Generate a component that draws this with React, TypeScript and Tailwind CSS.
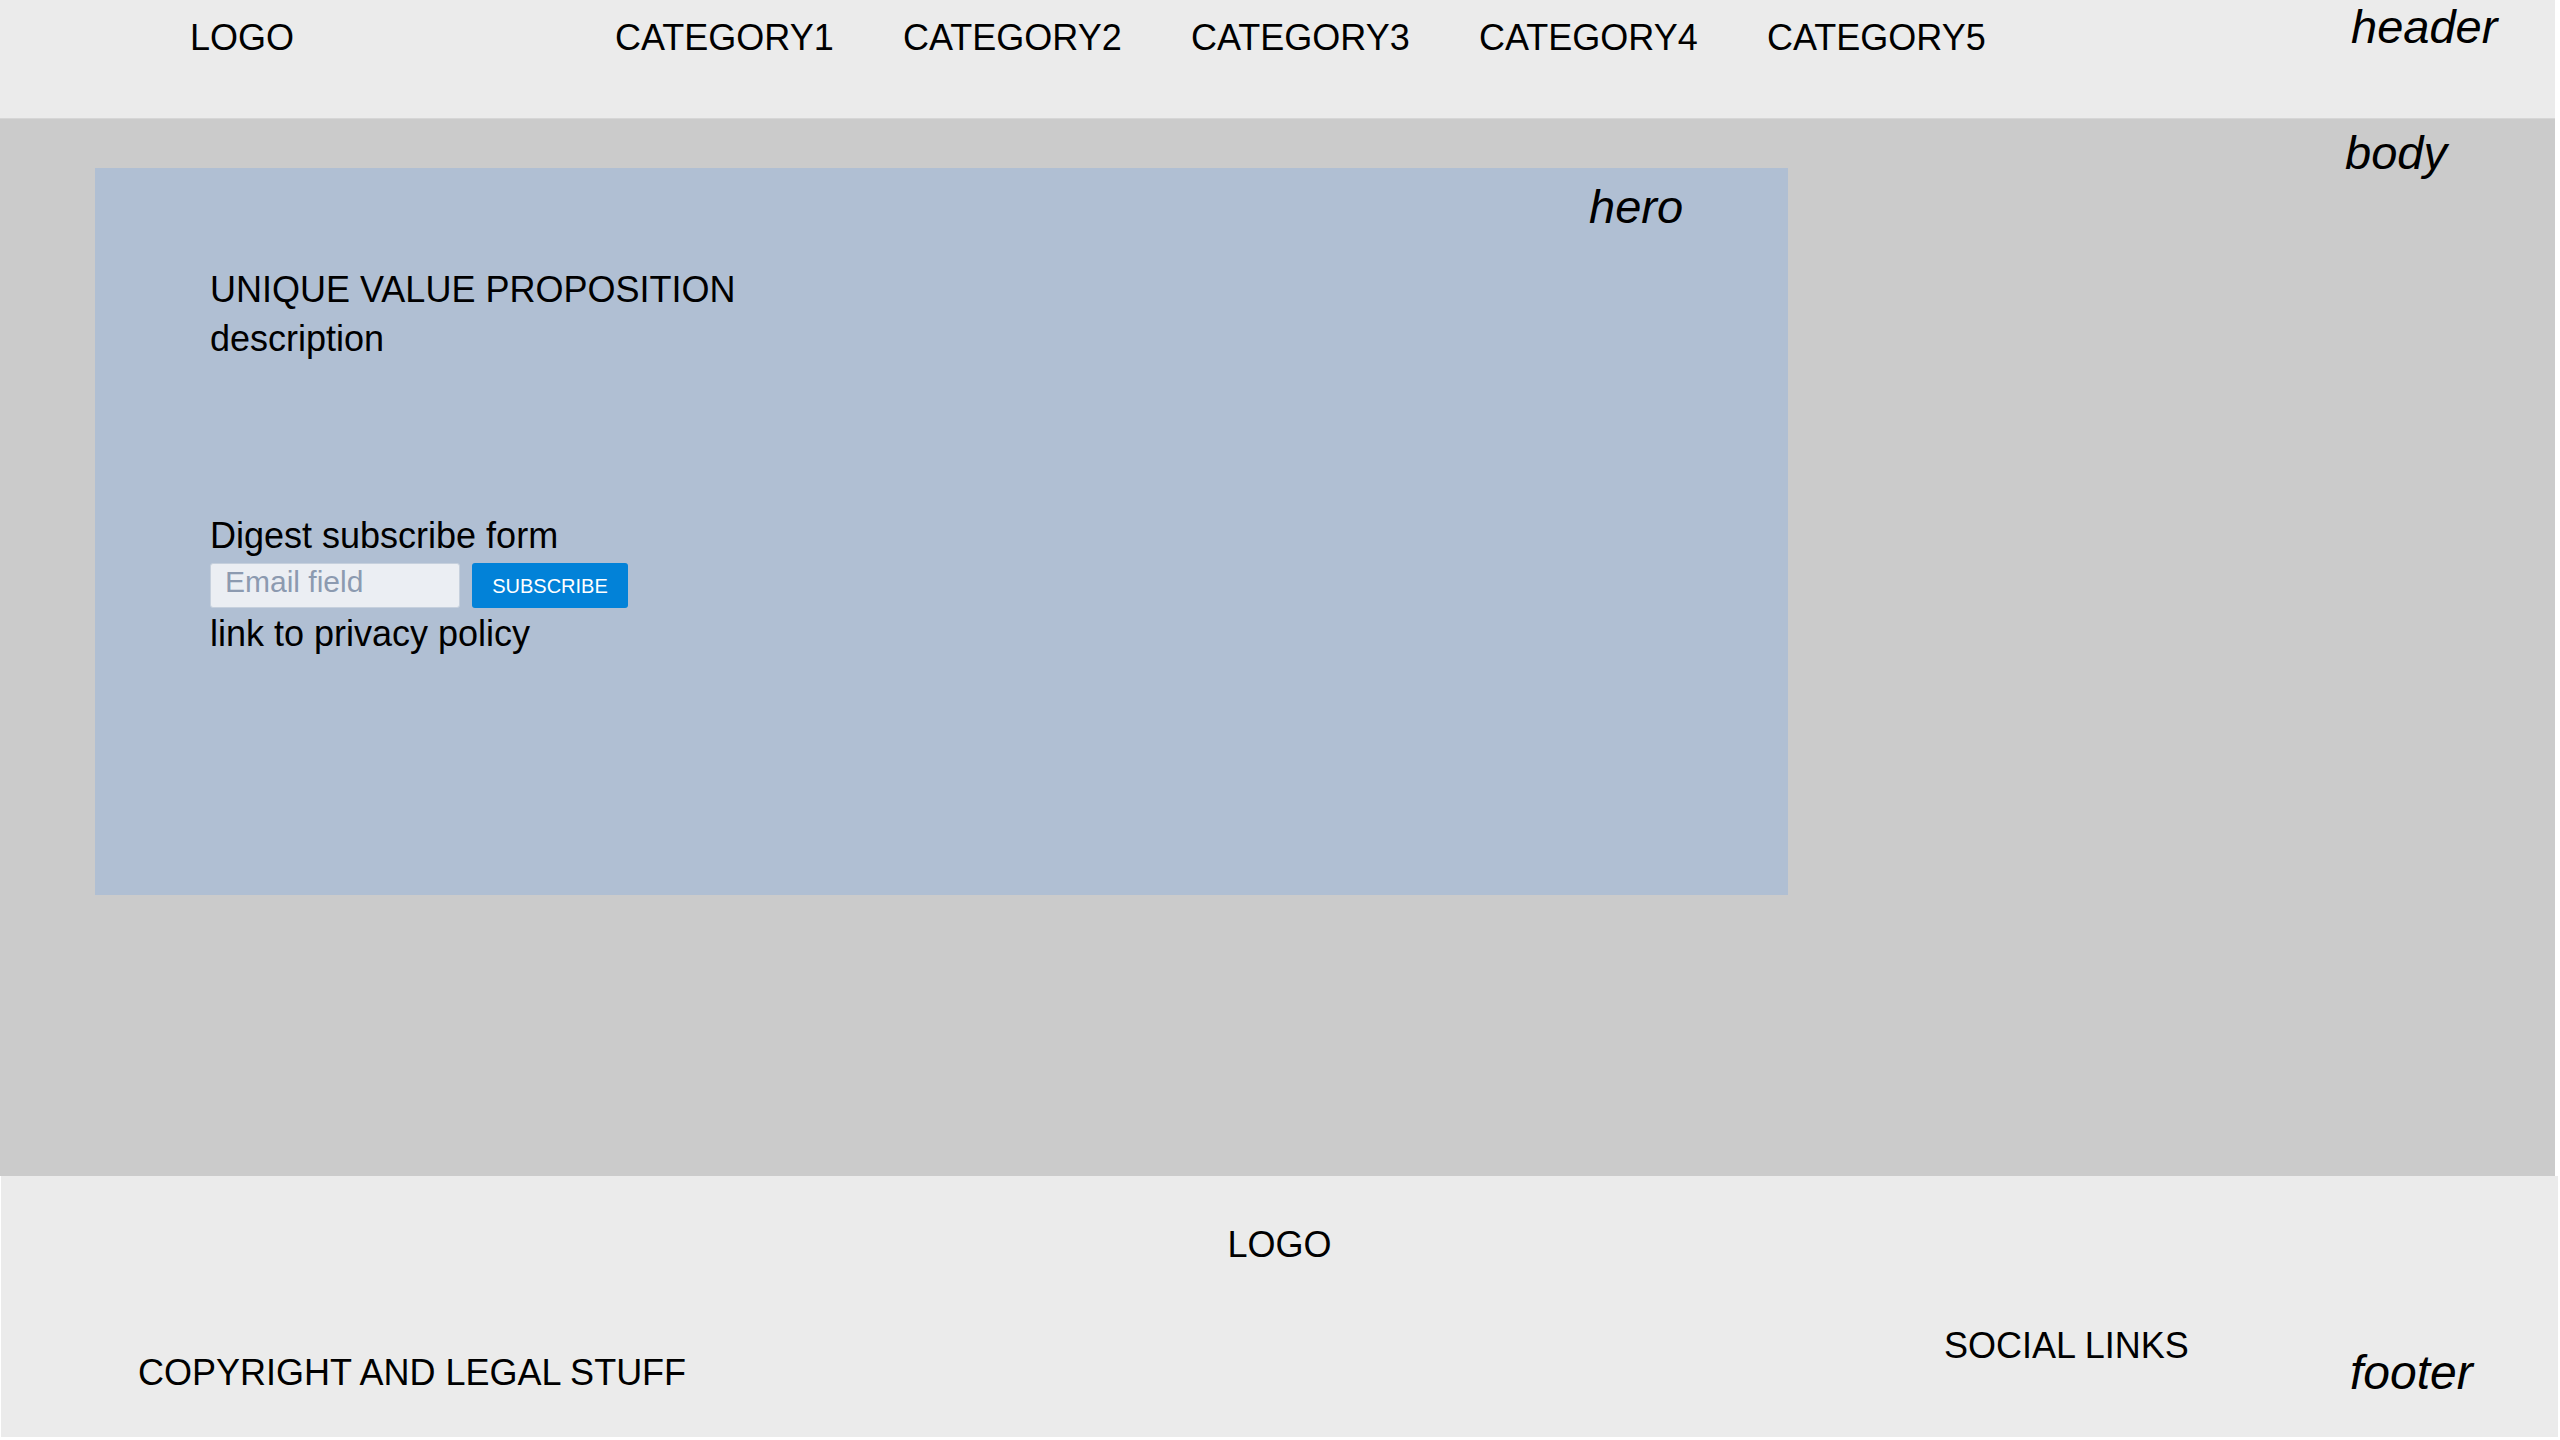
import React from "react";

const categories = ["CATEGORY1", "CATEGORY2", "CATEGORY3", "CATEGORY4", "CATEGORY5"];

const App: React.FC = () => {
  return (
    <div className="w-[2555px] bg-white font-['Liberation_Sans',Arial,sans-serif] text-black">
      {/* Header */}
      <header className="flex h-[118px] items-start bg-[#ebebeb] pl-[190px]">
        <div className="w-[425px] pt-[17px] text-[36px] leading-[41px]">LOGO</div>
        {categories.map((c) => (
          <div key={c} className="w-[288px] pt-[17px] text-[36px] leading-[41px]">
            {c}
          </div>
        ))}
        <div className="ml-[296px] text-[47px] italic leading-[54px]">header</div>
      </header>

      {/* Body */}
      <main className="flex h-[1058px] items-start border-t border-[#d6d6d6] bg-[#cbcbcb]">
        <section className="ml-[95px] mt-[49px] flex h-[727px] w-[1693px] items-start bg-[#b0bfd3]">
          <div className="flex w-[1494px] flex-col pl-[115px] pt-[101px] text-[36px] leading-[41px]">
            <h1>UNIQUE VALUE PROPOSITION</h1>
            <p className="mt-[8px]">description</p>

            <p className="mt-[156px]">Digest subscribe form</p>
            <form className="mt-[7px] flex" onSubmit={(e) => e.preventDefault()}>
              <input
                type="email"
                placeholder="Email field"
                className="box-border h-[45px] w-[250px] rounded-[3px] border border-[#c6d0dd] bg-[#ebeef3] pb-[7px] pl-[14px] text-[30px] outline-none placeholder:text-[#8c9ab0]"
              />
              <button
                type="submit"
                className="ml-[12px] h-[45px] w-[156px] rounded-[3px] bg-[#0282d8] text-[20px] leading-none text-white"
              >
                SUBSCRIBE
              </button>
            </form>
            <a href="#" className="mt-[5px]">
              link to privacy policy
            </a>
          </div>
          <div className="mt-[12px] text-[47px] italic leading-[54px]">hero</div>
        </section>
        <div className="ml-[557px] mt-[7px] text-[47px] italic leading-[54px]">body</div>
      </main>

      {/* Footer */}
      <footer className="ml-px flex h-[261px] w-[2557px] flex-col bg-[#ebebeb] text-[36px] leading-[41px]">
        <div className="pt-[48px] text-center">LOGO</div>
        <div className="mt-[60px] flex items-start pl-[137px]">
          <div className="mt-[27px] w-[1806px]">COPYRIGHT AND LEGAL STUFF</div>
          <div className="w-[406px]">SOCIAL LINKS</div>
          <div className="mt-[21px] text-[48px] italic leading-[54px]">footer</div>
        </div>
      </footer>
    </div>
  );
};

export default App;
